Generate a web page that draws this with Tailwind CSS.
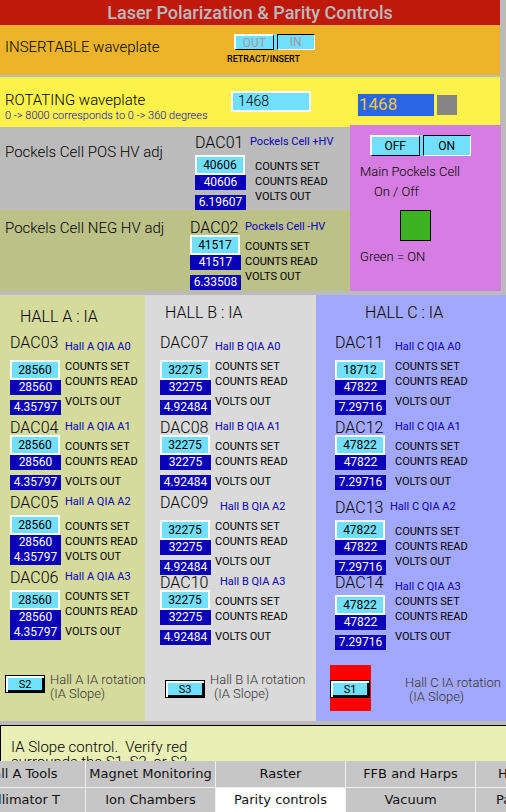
<!DOCTYPE html>
<html lang="en">
<head>
<meta charset="utf-8">
<title>Laser Polarization &amp; Parity Controls</title>
<script src="https://cdn.jsdelivr.net/npm/@tailwindcss/browser@4"></script>
</head>
<body class="bg-[#bbbbbb] text-black font-[Roboto,sans-serif] font-light">
<div class="flex h-screen flex-col overflow-hidden">
  <main class="min-h-0 flex-1 overflow-hidden">
    <div class="mr-[6px]">
      <h1 class="bg-[#be190b] text-center text-[18px] leading-[25px] font-medium text-[#bbbbbb]">Laser Polarization &amp; Parity Controls</h1>

      <section class="grid h-[50px] grid-cols-[227px_1fr] bg-[#edb42b]">
        <h2 class="pt-[12px] pl-[5px] text-[15px] leading-[20px]">INSERTABLE waveplate</h2>
        <div class="pt-[9px]">
          <div class="ml-[7px] flex w-[81px] gap-[3px] bg-[#73dfff] text-[12px] leading-[12px] font-normal text-[#a3999b]">
            <button disabled class="h-[16px] flex-1 border-t-2 border-r border-b border-l-2 border-t-white border-r-black border-b-black border-l-white">OUT</button>
            <button disabled class="h-[16px] flex-1 border border-t-black border-r-white border-b-white border-l-black">IN</button>
          </div>
          <p class="pt-[3px] text-[9px] leading-[12px] font-medium">RETRACT/INSERT</p>
        </div>
      </section>

      <section class="mt-[2px] grid h-[50px] grid-cols-[231px_1fr] bg-[#fcf24a]">
        <div class="pt-[14px] pl-[5px]">
          <h2 class="text-[15px] leading-[18px]"><label for="rot">ROTATING waveplate</label></h2>
          <p class="text-[11px] leading-[14px] whitespace-nowrap text-[#0a00b8]">0 -&gt; 8000 corresponds to 0 -&gt; 360 degrees</p>
        </div>
        <div class="flex items-start pt-[14px]">
          <input id="rot" value="1468" class="h-[21px] w-[80px] border-2 border-white bg-[#73dfff] pl-[5px] text-[14px]">
          <output class="mt-[3px] ml-[47px] h-[22px] w-[76px] bg-[#2a65e6] pl-[1px] text-[17px] leading-[20px] font-normal text-[#f8c73c]">1468</output>
          <span class="mt-[4px] ml-[3px] size-[20px] bg-[#858585]"></span>
        </div>
      </section>

      <div class="mr-[-1px] grid grid-cols-[350fr_151fr]">
        <div>
          <section class="flex h-[83px] justify-between pt-[3px]">
            <h2 class="pt-[12px] pl-[5px] text-[15px] leading-[20px]">Pockels Cell POS HV adj</h2>
            <div data-bank="P" class="flex w-[155px] pt-0"></div>
          </section>
          <section class="flex h-[81px] justify-between bg-[#bbc187] pt-[5px]">
            <h2 class="pt-[3px] pl-[5px] text-[15px] leading-[20px]">Pockels Cell NEG HV adj</h2>
            <div data-bank="N" class="flex w-[160px] pt-0"></div>
          </section>
        </div>
        <section class="relative -mt-[2px] bg-[#d57de2] pt-[10px] pl-[10px] text-[13px] leading-[20px]">
          <div class="ml-[10px] flex w-[101px] gap-[3px] bg-[#73dfff] text-[12px] leading-[16px] font-normal">
            <button class="h-[21px] flex-1 border-t-2 border-r border-b border-l-2 border-t-white border-r-black border-b-black border-l-white">OFF</button>
            <button class="h-[21px] flex-1 border border-t-black border-r-white border-b-white border-l-black">ON</button>
          </div>
          <p class="mt-[6px]">Main Pockels Cell</p>
          <p class="pl-[14px]">On / Off</p>
          <div class="mt-[8px] ml-[40px] size-[31px] border border-black bg-[#3eb321]"></div>
          <p class="mt-[6px]">Green = ON</p>
        </section>
      </div>
    </div>

    <div class="mt-[4px] grid grid-cols-[minmax(0,145fr)_minmax(0,171fr)_minmax(0,190fr)]">
      <section class="flex flex-col bg-[#d5db9d]">
        <h2 class="h-[40px] pt-[12px] pl-[20px] text-[16px] leading-[20px]">HALL A : IA</h2>
        <div data-bank="A" class="flex pl-[10px]"></div>
        <div class="mt-auto flex h-[56px] pl-[5px]">
          <button class="mt-[10px] h-[18px] w-[40px] shrink-0 border border-black bg-white pt-[2px] pl-[2px]"><span class="block h-full border-r-2 border-b-2 border-black bg-[#73dfff] text-[11px] leading-[14px] font-normal">S2</span></button>
          <p class="mt-[8px] ml-[5px] text-[13px] leading-[14px] whitespace-nowrap text-[#333333]">Hall A IA rotation<br>(IA Slope)</p>
        </div>
      </section>
      <section class="flex flex-col bg-[#dadada]">
        <h2 class="h-[40px] pt-[8px] pl-[20px] text-[16px] leading-[20px]">HALL B : IA</h2>
        <div data-bank="B" class="flex pl-[15px]"></div>
        <div class="mt-auto flex h-[56px] pl-[20px]">
          <button class="mt-[15px] h-[18px] w-[40px] shrink-0 border border-black bg-white pt-[2px] pl-[2px]"><span class="block h-full border-r-2 border-b-2 border-black bg-[#73dfff] text-[11px] leading-[14px] font-normal">S3</span></button>
          <p class="mt-[8px] ml-[5px] text-[13px] leading-[14px] whitespace-nowrap text-[#333333]">Hall B IA rotation<br><span class="pl-[4px]">(IA Slope)</span></p>
        </div>
      </section>
      <section class="flex flex-col bg-[#a3a8ff]">
        <h2 class="h-[40px] pt-[8px] pl-[49px] text-[16px] leading-[20px]">HALL C : IA</h2>
        <div data-bank="C" class="flex pl-[19px]"></div>
        <div class="mt-[15px] flex h-[56px] items-start pl-[14px]">
          <div class="w-[41px] shrink-0 bg-[#ff0000] pt-[15px] pb-[13px]">
            <button class="block h-[18px] w-[40px] border border-black bg-white pt-[2px] pl-[2px]"><span class="block h-full border-r-2 border-b-2 border-black bg-[#73dfff] text-[11px] leading-[14px] font-normal">S1</span></button>
          </div>
          <p class="mt-[11px] ml-[34px] text-[13px] leading-[14px] whitespace-nowrap text-[#333333]">Hall C IA rotation<br><span class="pl-[4px]">(IA Slope)</span></p>
        </div>
      </section>
    </div>

    <p class="mt-[4px] h-[90px] border-t border-l border-black bg-[#eaf0b5] pt-[14px] pl-[10px] text-[15px] leading-[15px] whitespace-pre">IA Slope control.  Verify red
surrounds the S1, S2, or S3</p>
  </main>

  <nav class="overflow-hidden bg-[#f0f0f0] font-['DejaVu_Sans',sans-serif] text-[13px] leading-[26px] font-normal text-[#111111]">
    <div class="-ml-[44px] grid w-[649px] grid-cols-5 gap-px text-center">
      <a href="#" class="bg-[#c6c6c6]">Hall A Tools</a>
      <a href="#" class="bg-[#c6c6c6]">Magnet Monitoring</a>
      <a href="#" class="bg-[#c6c6c6]">Raster</a>
      <a href="#" class="bg-[#c6c6c6]">FFB and Harps</a>
      <a href="#" class="bg-[#c6c6c6] pl-[22px] text-left">H</a>
      <a href="#" class="h-[24px] bg-[#c6c6c6] leading-[24px]">Collimator T</a>
      <a href="#" class="h-[24px] bg-[#c6c6c6] leading-[24px]">Ion Chambers</a>
      <a href="#" class="h-[24px] bg-white leading-[24px]">Parity controls</a>
      <a href="#" class="h-[24px] bg-[#c6c6c6] leading-[24px]">Vacuum</a>
      <a href="#" class="h-[24px] bg-[#c6c6c6] pl-[20px] text-left leading-[24px]">Pa</a>
    </div>
  </nav>
</div>

<script>
// Vertical gaps between the rows of a bank.
const gap = { 0: 'mt-0', 5: 'mt-[5px]', 10: 'mt-[10px]' };
const same = 'ml-0', right = 'ml-[5px]', left = '-ml-[5px]';

// Each channel: name, tag, set, read, volts, gaps of the value column, gaps of the label column, tag indent.
const banks = {
  P: { pad: 'pt-[5px]', lab: 'ml-[9px]', rows: [
    ['DAC01', 'Pockels Cell +HV', '40606', '40606', '6.19607', [0, 5, 0, 5], [0, 10, 0, 0], left]] },
  N: { pad: 'pt-[5px]', lab: 'ml-[4px]', rows: [
    ['DAC02', 'Pockels Cell -HV', '41517', '41517', '6.33508', [0, 0, 0, 5], [0, 5, 0, 0], same]] },
  A: { pad: 'pt-0', lab: 'ml-[4px]', rows: [
    ['DAC03', 'Hall A QIA A0', '28560', '28560', '4.35797', [0, 10, 0, 5], [0, 5, 0, 5], same],
    ['DAC04', 'Hall A QIA A1', '28560', '28560', '4.35797', [5, 0, 0, 5], [10, 5, 0, 5], same],
    ['DAC05', 'Hall A QIA A2', '28560', '28560', '4.35797', [5, 5, 0, 0], [5, 10, 0, 0], same],
    ['DAC06', 'Hall A QIA A3', '28560', '28560', '4.35797', [5, 5, 0, 0], [5, 5, 0, 5], same]] },
  B: { pad: 'pt-0', lab: 'ml-[4px]', rows: [
    ['DAC07', 'Hall B QIA A0', '32275', '32275', '4.92484', [0, 10, 0, 5], [0, 5, 0, 5], same],
    ['DAC08', 'Hall B QIA A1', '32275', '32275', '4.92484', [5, 0, 0, 5], [10, 5, 0, 5], same],
    ['DAC09', 'Hall B QIA A2', '32275', '32275', '4.92484', [5, 10, 0, 5], [10, 5, 0, 5], right],
    ['DAC10', 'Hall B QIA A3', '32275', '32275', '4.92484', [0, 0, 0, 5], [5, 5, 0, 5], right]] },
  C: { pad: 'pt-0', lab: 'ml-[9px]', rows: [
    ['DAC11', 'Hall C QIA A0', '18712', '47822', '7.29716', [0, 10, 0, 5], [0, 5, 0, 5], same],
    ['DAC12', 'Hall C QIA A1', '47822', '47822', '7.29716', [5, 0, 0, 5], [10, 5, 0, 5], same],
    ['DAC13', 'Hall C QIA A2', '47822', '47822', '7.29716', [10, 5, 0, 5], [10, 10, 0, 0], left],
    ['DAC14', 'Hall C QIA A3', '47822', '47822', '7.29716', [0, 5, 0, 5], [10, 0, 0, 5], same]] },
};

for (const el of document.querySelectorAll('[data-bank]')) {
  const b = banks[el.dataset.bank];
  const values = b.rows.map(([n, , s, r, v, g]) => `
    <h3 class="${gap[g[0]]} h-[15px] text-[16px] leading-[16px]">${n}</h3>
    <input id="${n}-set" value="${s}" class="${gap[g[1]]} block h-[20px] w-[50px] border-2 border-white bg-[#73dfff] text-center text-[12px] font-normal">
    <output id="${n}-read" class="${gap[g[2]]} block h-[15px] bg-[#0a00b8] text-center text-[12px] leading-[15px] font-normal text-white">${r}</output>
    <output id="${n}-volts" class="${gap[g[3]]} block h-[15px] bg-[#0a00b8] text-center text-[12px] leading-[15px] font-normal text-white">${v}</output>`).join('');
  const labels = b.rows.map(([n, t, , , , , g, shift]) => `
    <p class="${gap[g[0]]} ${shift} text-[#0a00b8]">${t}</p>
    <label for="${n}-set" class="${gap[g[1]]} block">COUNTS SET</label>
    <label for="${n}-read" class="${gap[g[2]]} block">COUNTS READ</label>
    <label for="${n}-volts" class="${gap[g[3]]} block">VOLTS OUT</label>`).join('');
  el.innerHTML = `<div class="w-[51px] shrink-0 ${b.pad}">${values}</div>
    <div class="${b.lab} pt-[4px] text-[11px] leading-[15px] font-normal whitespace-nowrap">${labels}</div>`;
}
</script>
</body>
</html>
